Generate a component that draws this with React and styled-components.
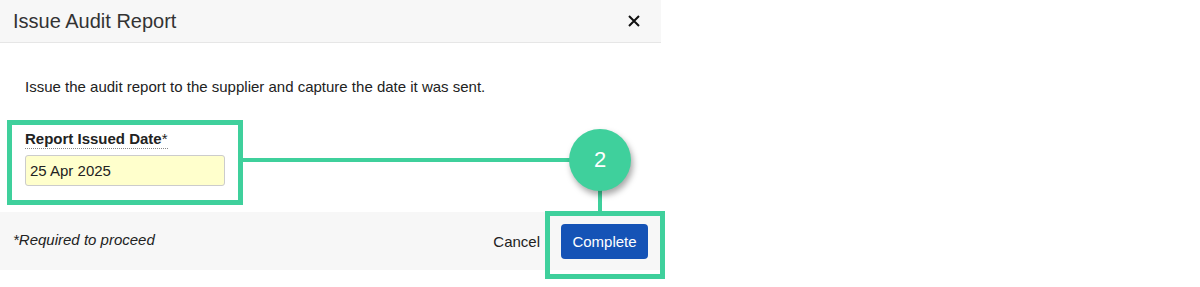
import React from "react";
import styled, { createGlobalStyle } from "styled-components";

const Global = createGlobalStyle`
  html, body { margin: 0; padding: 0; background: #fff; }
  body { font-family: "Liberation Sans", Arial, sans-serif; color: #333; }
  * { box-sizing: border-box; }
`;

const GREEN = "#3fd09c";

const Page = styled.div`
  position: relative;
  width: 1200px;
  height: 287px;
  background: #fff;
`;

const Dialog = styled.div`
  width: 661px;
  display: flex;
  flex-direction: column;
`;

const Header = styled.div`
  height: 43px;
  background: #f7f7f7;
  border-bottom: 1px solid #e6e6e6;
  display: flex;
  align-items: center;
  justify-content: space-between;
  padding: 0 20px 0 13px;
`;

const Title = styled.h1`
  margin: 0;
  font-size: 20px;
  font-weight: 400;
  color: #333;
  line-height: 1;
`;

const CloseButton = styled.button`
  border: 0;
  background: transparent;
  padding: 0;
  width: 14px;
  height: 14px;
  display: flex;
  align-items: center;
  justify-content: center;
  cursor: pointer;
`;

const Body = styled.div`
  background: #fff;
  padding: 34px 25px 26px;
  display: flex;
  flex-direction: column;
`;

const Intro = styled.p`
  margin: 0;
  font-size: 15px;
  line-height: 20px;
  color: #222;
`;

const Field = styled.div`
  margin-top: 33px;
  display: flex;
  flex-direction: column;
  align-items: flex-start;
`;

const Label = styled.label`
  font-size: 15px;
  font-weight: 700;
  color: #222;
  line-height: 17px;
  border-bottom: 1px dotted #888;
  padding-bottom: 1px;
`;

const Star = styled.span`
  font-weight: 400;
`;

const Input = styled.input`
  margin-top: 6px;
  width: 200px;
  height: 31px;
  background: #ffffcc;
  border: 1px solid #cccccc;
  border-radius: 3px;
  padding: 0 4px;
  font-family: "Liberation Sans", Arial, sans-serif;
  font-size: 15px;
  color: #222;
  outline: none;
`;

const Footer = styled.div`
  height: 58px;
  background: #f7f7f7;
  display: flex;
  align-items: center;
  justify-content: space-between;
  padding: 0 13px;
`;

const Required = styled.span`
  font-size: 15px;
  font-style: italic;
  color: #222;
  margin-top: -3px;
`;

const Actions = styled.div`
  display: flex;
  align-items: center;
  gap: 21px;
`;

const LinkButton = styled.button`
  border: 0;
  background: transparent;
  padding: 0;
  font-family: inherit;
  font-size: 15px;
  color: #222;
  cursor: pointer;
`;

const PrimaryButton = styled.button`
  width: 87px;
  height: 35px;
  border: 0;
  border-radius: 4px;
  background: #1553b6;
  color: #fff;
  font-family: inherit;
  font-size: 15px;
  cursor: pointer;
`;

const Highlight = styled.div`
  position: absolute;
  border: 5px solid ${GREEN};
  pointer-events: none;
`;

const Line = styled.div`
  position: absolute;
  background: ${GREEN};
`;

const Badge = styled.div`
  position: absolute;
  width: 62px;
  height: 62px;
  border-radius: 50%;
  background: ${GREEN};
  color: #fff;
  font-size: 22px;
  display: flex;
  align-items: center;
  justify-content: center;
  box-shadow: 2px 4px 6px rgba(0, 0, 0, 0.35);
`;

export default function App() {
  return (
    <Page>
      <Global />
      <Dialog>
        <Header>
          <Title>Issue Audit Report</Title>
          <CloseButton aria-label="Close">
            <svg width="12" height="12" viewBox="0 0 12 12">
              <path d="M1 1 L11 11 M11 1 L1 11" stroke="#111" strokeWidth="2" />
            </svg>
          </CloseButton>
        </Header>
        <Body>
          <Intro>Issue the audit report to the supplier and capture the date it was sent.</Intro>
          <Field>
            <Label>
              Report Issued Date<Star>*</Star>
            </Label>
            <Input defaultValue="25 Apr 2025" />
          </Field>
        </Body>
        <Footer>
          <Required>*Required to proceed</Required>
          <Actions>
            <LinkButton>Cancel</LinkButton>
            <PrimaryButton>Complete</PrimaryButton>
          </Actions>
        </Footer>
      </Dialog>

      <Highlight style={{ left: 7, top: 120, width: 236, height: 85 }} />
      <Line style={{ left: 243, top: 158, width: 330, height: 4 }} />
      <Line style={{ left: 598, top: 185, width: 4, height: 27 }} />
      <Highlight style={{ left: 545, top: 211, width: 120, height: 68 }} />
      <Badge style={{ left: 569, top: 129 }}>2</Badge>
    </Page>
  );
}
